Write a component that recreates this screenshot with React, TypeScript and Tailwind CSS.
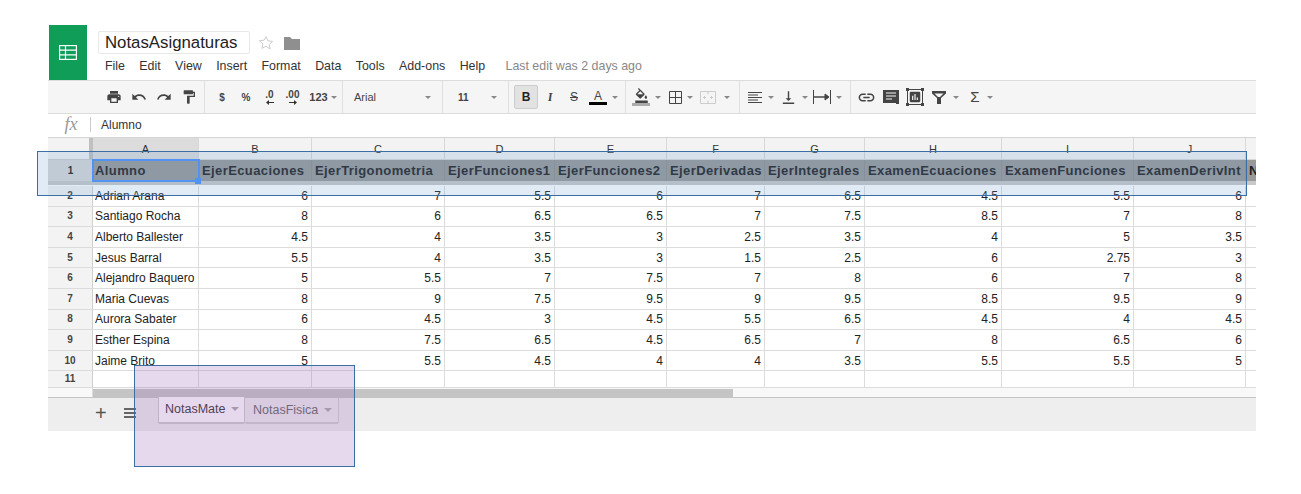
import type { ReactNode } from "react";
import {
  MdFormatColorFill,
  MdFormatPaint,
  MdInsertChart,
  MdLink,
  MdPrint,
  MdRedo,
  MdUndo,
  MdVerticalAlignBottom,
} from "react-icons/md";

const COLS = "grid grid-cols-[45px_106px_113px_133px_110px_112px_98px_100px_137px_132px_112px_10px]";

const LETTERS = ["A", "B", "C", "D", "E", "F", "G", "H", "I", "J"];
const HEADERS = [
  "Alumno",
  "EjerEcuaciones",
  "EjerTrigonometria",
  "EjerFunciones1",
  "EjerFunciones2",
  "EjerDerivadas",
  "EjerIntegrales",
  "ExamenEcuaciones",
  "ExamenFunciones",
  "ExamenDerivInt",
];
const ROWS: [string, ...string[]][] = [
  ["Adrian Arana", "6", "7", "5.5", "6", "7", "6.5", "4.5", "5.5", "6"],
  ["Santiago Rocha", "8", "6", "6.5", "6.5", "7", "7.5", "8.5", "7", "8"],
  ["Alberto Ballester", "4.5", "4", "3.5", "3", "2.5", "3.5", "4", "5", "3.5"],
  ["Jesus Barral", "5.5", "4", "3.5", "3", "1.5", "2.5", "6", "2.75", "3"],
  ["Alejandro Baquero", "5", "5.5", "7", "7.5", "7", "8", "6", "7", "8"],
  ["Maria Cuevas", "8", "9", "7.5", "9.5", "9", "9.5", "8.5", "9.5", "9"],
  ["Aurora Sabater", "6", "4.5", "3", "4.5", "5.5", "6.5", "4.5", "4", "4.5"],
  ["Esther Espina", "8", "7.5", "6.5", "4.5", "6.5", "7", "8", "6.5", "6"],
  ["Jaime Brito", "5", "5.5", "4.5", "4", "4", "3.5", "5.5", "5.5", "5"],
];
const MENU = ["File", "Edit", "View", "Insert", "Format", "Data", "Tools", "Add-ons", "Help"];

function Caret() {
  return <span className="inline-block h-0 w-0 border-x-[3px] border-t-[3px] border-x-transparent border-t-[#888]" />;
}

function Tool({ w, children }: { w: string; children: ReactNode }) {
  return <div className={`flex shrink-0 items-center justify-center ${w}`}>{children}</div>;
}

function Sep() {
  return <div className="h-full w-px shrink-0 bg-[#e0e0e0]" />;
}

function Decimal({ label, right }: { label: string; right?: boolean }) {
  return (
    <div className="flex flex-col items-center">
      <span className="text-[10px] leading-[10px]">{label}</span>
      <svg width="10" height="5" viewBox="0 0 10 5" fill="#333">
        {right ? <path d="M1 2h5V0l3 2.5L6 5V3H1z" /> : <path d="M9 2H4V0L1 2.5 4 5V3h5z" />}
      </svg>
    </div>
  );
}

function Toolbar() {
  return (
    <div className="flex h-[34px] items-center border-y border-[#dcdcdc] bg-[#f5f5f5] text-[10px] font-bold text-[#444]">
      <div className="w-[54px] shrink-0" />
      <Tool w="w-[24px]"><MdPrint size={16} /></Tool>
      <Tool w="w-[25px]"><MdUndo size={16} /></Tool>
      <Tool w="w-[25px]"><MdRedo size={16} /></Tool>
      <Tool w="w-[25px]"><MdFormatPaint size={16} /></Tool>
      <div className="w-[3px] shrink-0" />
      <Sep />
      <div className="w-[5px] shrink-0" />
      <Tool w="w-[24px]">$</Tool>
      <Tool w="w-[24px]">%</Tool>
      <Tool w="w-[23px]"><Decimal label=".0" /></Tool>
      <Tool w="w-[23px]"><Decimal label=".00" right /></Tool>
      <Tool w="w-[38px]"><span className="mr-[3px] text-[11px]">123</span><Caret /></Tool>
      <Sep />
      <div className="flex h-full w-[99px] shrink-0 items-center justify-between px-[11px] text-[11px] font-normal">
        <span>Arial</span>
        <Caret />
      </div>
      <Sep />
      <div className="flex h-full w-[65px] shrink-0 items-center justify-between pl-[15px] pr-[11px] text-[10px]">
        <span>11</span>
        <Caret />
      </div>
      <Sep />
      <div className="w-[5px] shrink-0" />
      <div className="flex h-[24px] w-[24px] shrink-0 items-center justify-center rounded-[2px] border border-[#ccc] bg-[#e2e2e2] text-[12px] text-[#222]">B</div>
      <Tool w="w-[24px]"><span className="font-serif text-[12px] italic">I</span></Tool>
      <Tool w="w-[24px]"><span className="text-[12px] font-normal line-through">S</span></Tool>
      <Tool w="w-[24px]">
        <div className="flex flex-col items-center">
          <span className="text-[12px] font-normal leading-[12px]">A</span>
          <div className="h-[3px] w-[18px] bg-black" />
        </div>
      </Tool>
      <Tool w="w-[9px]"><Caret /></Tool>
      <div className="w-[6px] shrink-0" />
      <Sep />
      <div className="w-[2px] shrink-0" />
      <Tool w="w-[26px]">
        <div className="flex flex-col items-center">
          <MdFormatColorFill size={15} />
          <div className="h-[3px] w-[18px] bg-[#aaa]" />
        </div>
      </Tool>
      <Tool w="w-[8px]"><Caret /></Tool>
      <Tool w="w-[26px]">
        <svg width="13" height="13" viewBox="0 0 13 13" fill="none" stroke="#444">
          <path d="M.5.5h12v12H.5zM6.5.5v12M.5 6.5h12" />
        </svg>
      </Tool>
      <Tool w="w-[4px]"><Caret /></Tool>
      <Tool w="w-[32px]">
        <svg width="16" height="13" viewBox="0 0 16 13" fill="none" stroke="#ccc">
          <path d="M.5.5h15v12H.5zM8 .5v3M8 9.5v3M3 6.5h3M10 6.5h3M4.500 5v3M11.500 5v3" />
        </svg>
      </Tool>
      <Tool w="w-[6px]"><Caret /></Tool>
      <div className="w-[9px] shrink-0" />
      <Sep />
      <div className="w-[2px] shrink-0" />
      <Tool w="w-[26px]">
        <svg width="14" height="13" viewBox="0 0 14 13" stroke="#444">
          <path d="M0 1.500h14M0 4h10M0 6.500h14M0 9h10M0 11.500h14" />
        </svg>
      </Tool>
      <Tool w="w-[6px]"><Caret /></Tool>
      <Tool w="w-[29px]"><MdVerticalAlignBottom size={17} /></Tool>
      <Tool w="w-[4px]"><Caret /></Tool>
      <Tool w="w-[30px]">
        <svg width="18" height="14" viewBox="0 0 18 14" fill="none" stroke="#444">
          <path d="M.5 0v14M17.500 0v14" />
          <path d="M1 7h11" strokeWidth="1.500" />
          <path d="M12 4l4 3-4 3z" fill="#444" />
        </svg>
      </Tool>
      <Tool w="w-[4px]"><Caret /></Tool>
      <div className="w-[9px] shrink-0" />
      <Sep />
      <Tool w="w-[30px]"><MdLink size={19} /></Tool>
      <Tool w="w-[20px]">
        <svg width="16" height="15" viewBox="0 0 16 15">
          <path d="M0 0h16v14h-3v-1H0z" fill="#444" />
          <path d="M3 3h10M3 6h10M3 9h6" stroke="#f5f5f5" strokeWidth="1" />
        </svg>
      </Tool>
      <Tool w="w-[28px]">
        <div className="relative flex h-[16px] w-[16px] items-center justify-center border border-[#444]">
          <MdInsertChart size={14} />
          <div className="absolute -left-[2px] -top-[2px] h-[3px] w-[3px] bg-[#444]" />
          <div className="absolute -right-[2px] -top-[2px] h-[3px] w-[3px] bg-[#444]" />
          <div className="absolute -bottom-[2px] -left-[2px] h-[3px] w-[3px] bg-[#444]" />
          <div className="absolute -bottom-[2px] -right-[2px] h-[3px] w-[3px] bg-[#444]" />
        </div>
      </Tool>
      <Tool w="w-[20px]">
        <svg width="14" height="13" viewBox="0 0 14 13">
          <path d="M0 0h14v2.500L9 7v6H5V7L0 2.500z" fill="#444" />
          <path d="M2.500 2.500h9L8 6H6z" fill="#f5f5f5" />
        </svg>
      </Tool>
      <Tool w="w-[14px]"><Caret /></Tool>
      <Tool w="w-[24px]"><span className="text-[15px] font-normal">Σ</span></Tool>
      <Tool w="w-[6px]"><Caret /></Tool>
    </div>
  );
}

function Sheet() {
  return (
    <div className="text-[12px] leading-none text-[#222]">
      <div className={`${COLS} h-[23px] border-t border-[#d4d4d4] bg-[#f3f3f3] text-[11px] text-[#333]`}>
        <div className="border-b border-[#ccc] border-r-4 border-r-[#c0c0c0]" />
        {LETTERS.map((c, i) => (
          <div
            key={c}
            className={`flex items-center justify-center border-b border-r border-[#d8d8d8] pt-[2px] ${i === 0 ? "bg-[#dcdcdc]" : ""}`}
          >
            {c}
          </div>
        ))}
        <div className="border-b border-[#d8d8d8]" />
      </div>

      <div className={`${COLS} h-[21px] bg-[#999999] text-[13px] font-bold tracking-[0.4px]`}>
        <div className="flex items-center justify-center bg-[#d8d8d8] text-[10px] font-bold tracking-normal">1</div>
        {HEADERS.map((h, i) => (
          <div
            key={h}
            className={`relative flex items-center whitespace-nowrap border-r border-[#8f8f8f] ${i === 0 ? "pl-[2px] outline-2 -outline-offset-1 outline-[#4d90fe]" : "pl-[3px]"}`}
          >
            {h}
            {i === 0 && <div className="absolute -bottom-[3px] -right-[3px] h-[6px] w-[6px] bg-[#4d90fe]" />}
          </div>
        ))}
        <div className="flex items-center overflow-hidden pl-[3px]">N</div>
      </div>
      <div className="mb-px h-[4px] bg-[#c8c8c8]" />

      {ROWS.map(([name, ...vals], i) => (
        <div key={name} className={`${COLS} h-[20.6px] border-b border-[#dcdcdc]`}>
          <div className="flex items-center justify-center border-r border-[#d0d0d0] bg-[#f3f3f3] text-[10px] font-bold text-[#444]">{i + 2}</div>
          <div className="flex items-center border-r border-[#dcdcdc] pl-[2px]">{name}</div>
          {vals.map((v, j) => (
            <div key={j} className="flex items-center justify-end border-r border-[#dcdcdc] pr-[3px]">{v}</div>
          ))}
          <div />
        </div>
      ))}
      <div className={`${COLS} h-[16.6px] border-b border-[#dcdcdc]`}>
        <div className="flex items-center justify-center border-r border-[#d0d0d0] bg-[#f3f3f3] text-[10px] font-bold text-[#444]">11</div>
        {LETTERS.map((c) => (
          <div key={c} className="border-r border-[#dcdcdc]" />
        ))}
      </div>

      <div className="flex h-[10px] border-b border-[#c4c4c4] bg-[#f8f8f8]">
        <div className="w-[45px] shrink-0 border-r border-[#dcdcdc]" />
        <div className="mt-[1px] h-[8px] w-[640px] bg-[#c4c4c4]" />
      </div>
    </div>
  );
}

function Tabs() {
  return (
    <div className="flex h-[33px] items-start bg-[#eeeeee] text-[12.5px] text-[#555]">
      <div className="flex h-[30px] w-[110px] shrink-0 items-center pl-[47px] text-[#555]">
        <span className="w-[29px] text-[20px] font-light leading-none">+</span>
        <div className="flex w-[12px] flex-col gap-[2px]">
          <div className="h-[2px] bg-[#666]" />
          <div className="h-[2px] bg-[#666]" />
          <div className="h-[2px] bg-[#666]" />
        </div>
      </div>
      <div className="-mt-px flex h-[27px] w-[87px] items-center justify-between rounded-b-[2px] border-x border-b-2 border-[#ccc] bg-white pl-[6px] pr-[5px] text-[#333]">
        <span>NotasMate</span>
        <span className="h-0 w-0 border-x-[4px] border-t-[4px] border-x-transparent border-t-[#aaa]" />
      </div>
      <div className="flex h-[26px] w-[94px] items-center justify-between rounded-b-[2px] border-r border-b-2 border-[#d0d0d0] bg-[#eeeeee] pl-[8px] pr-[6px] text-[#666]">
        <span>NotasFisica</span>
        <span className="h-0 w-0 border-x-[4px] border-t-[4px] border-x-transparent border-t-[#aaa]" />
      </div>
    </div>
  );
}

export default function App() {
  return (
    <div className="relative h-[494px] w-[1301px] overflow-hidden bg-white pl-[48px] pt-[25px] font-['Liberation_Sans',Arial,sans-serif]">
      <div className="w-[1208px]">
        <div className="flex h-[55px]">
          <div className="ml-px flex w-[38px] shrink-0 items-center justify-center bg-[#0f9d58]">
            <svg width="18" height="15" viewBox="0 0 18 15" fill="none" stroke="#fff" strokeWidth="1.2">
              <rect x="0.6" y="0.6" width="16.8" height="13.8" />
              <path d="M0.6 5.2h16.8M0.6 9.8h16.8M6.5 0.6v13.8" />
            </svg>
          </div>
          <div className="pl-[11px] pt-[6px]">
            <div className="flex items-center">
              <div className="flex h-[23px] w-[152px] items-center rounded-[2px] border border-[#e8e8e8] pl-[6px] text-[16.8px] text-[#222]">NotasAsignaturas</div>
              <svg className="ml-[8px]" width="16" height="16" viewBox="0 0 24 24" fill="none" stroke="#ccc" strokeWidth="1.5">
                <path d="M12 2.5l2.9 6.3 6.9.8-5.1 4.7 1.4 6.8L12 16.8l-6.1 3.3 1.4-6.8-5.1-4.7 6.9-.8z" />
              </svg>
              <svg className="ml-[10px]" width="16" height="14" viewBox="0 0 16 14">
                <path d="M0 1h6l2 2h8v11H0z" fill="#8f8f8f" />
              </svg>
            </div>
            <div className="mt-[3px] flex items-center gap-[14.4px] pl-[7px] text-[12.4px] text-[#333]">
              {MENU.map((m) => (
                <span key={m}>{m}</span>
              ))}
              <span className="ml-[6px] text-[#888]">Last edit was 2 days ago</span>
            </div>
          </div>
        </div>

        <Toolbar />

        <div className="flex h-[23px] items-center bg-white pb-[2px] text-[12px] text-[#333]">
          <span className="w-[46px] text-center font-['Liberation_Serif',serif] text-[18px] italic text-[#999]">fx</span>
          <div className="-ml-[4px] h-[15px] w-px bg-[#ccc]" />
          <span className="pl-[10px]">Alumno</span>
        </div>

        <Sheet />
        <Tabs />
      </div>

      <div className="absolute left-[37px] top-[151px] h-[45px] w-[1210px] border border-[#3a6ea5] bg-[rgba(105,155,210,0.2)]" />
      <div className="absolute left-[134px] top-[365px] h-[102px] w-[221px] border border-[#3a6ea5] bg-[rgba(155,103,187,0.25)]" />
    </div>
  );
}
